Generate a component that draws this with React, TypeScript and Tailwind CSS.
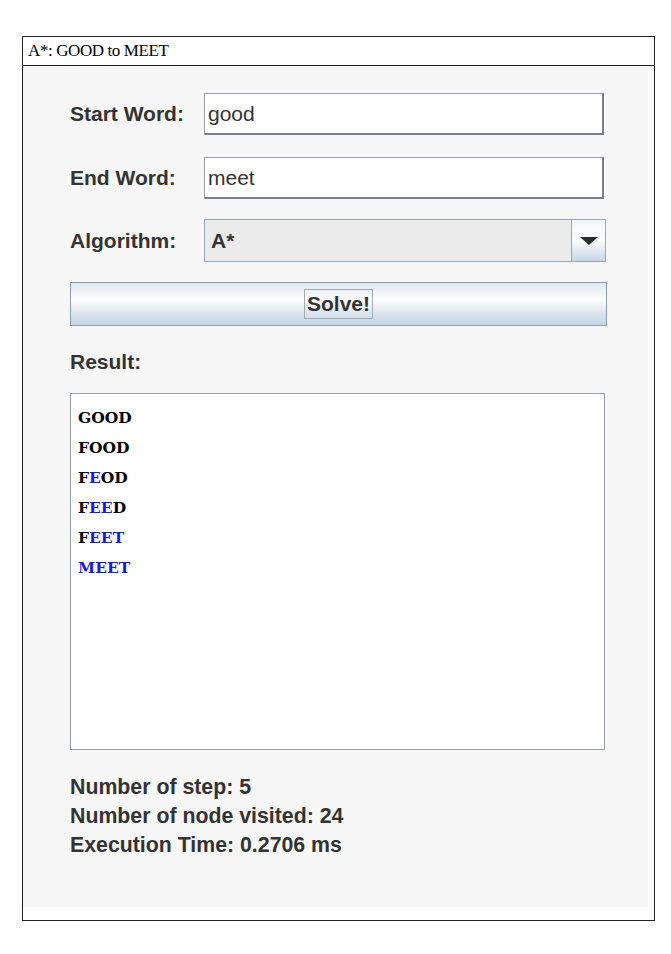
const steps: { text: string; blue: boolean[] }[] = [
  { text: "GOOD", blue: [false, false, false, false] },
  { text: "FOOD", blue: [false, false, false, false] },
  { text: "FEOD", blue: [false, true, false, false] },
  { text: "FEED", blue: [false, true, true, false] },
  { text: "FEET", blue: [false, true, true, true] },
  { text: "MEET", blue: [true, true, true, true] },
];

function Field({ label, value }: { label: string; value: string }) {
  return (
    <div className="flex items-center">
      <div className="w-[134px] text-[21px] font-bold text-[#333]">{label}</div>
      <div className="flex h-[42px] w-[400px] items-center border-t border-l border-r-2 border-b-2 border-t-[#9a9ea3] border-l-[#9a9ea3] border-r-[#7b7f84] border-b-[#7b7f84] bg-white pl-[3px] text-[21px] text-[#333]">
        {value}
      </div>
    </div>
  );
}

export default function App() {
  return (
    <div className="min-h-[954px] bg-white pt-[36px] pl-[22px] font-['Liberation_Sans',Arial,sans-serif]">
      <div className="w-[633px] border-[1.5px] border-[#222]">
        {/* Title */}
        <div className="flex h-[29px] items-center border-b-[1.5px] border-[#222] pl-[5px] font-['Liberation_Serif',serif] text-[17px] tracking-[-0.4px] text-black">
          A*: GOOD to MEET
        </div>

        <div className="h-[854px]">
          <div className="flex h-[841px] w-[625px] flex-col bg-[#f7f7f7] pt-[27px] pl-[47px]">
            <Field label="Start Word:" value="good" />
            <div className="mt-[22px]">
              <Field label="End Word:" value="meet" />
            </div>

            {/* Algorithm */}
            <div className="mt-[20px] flex items-center">
              <div className="w-[134px] text-[21px] font-bold text-[#333]">Algorithm:</div>
              <div className="flex h-[43px] w-[402px] border border-[#97a6b8] shadow-[inset_0_0_0_1px_#dde3ea]">
                <div className="flex flex-1 items-center bg-[#ebebeb] pl-[6px] text-[21px] font-bold text-[#333]">
                  A*
                </div>
                <div className="flex w-[34px] items-center justify-center border-l border-[#97a6b8] bg-gradient-to-b from-[#f4f7fa] via-[#fbfcfd] to-[#c9d6e4]">
                  <svg width="18" height="8" viewBox="0 0 18 8">
                    <path d="M0 0 H18 L9 8 Z" fill="#2b2b2b" />
                  </svg>
                </div>
              </div>
            </div>

            {/* Solve */}
            <div className="mt-[20px] flex h-[44px] w-[537px] items-center justify-center border border-[#8d9caf] bg-[linear-gradient(to_bottom,#e0e7ef_0%,#f6f8fa_30%,#ffffff_40%,#e2e9f1_65%,#c6d4e4_100%)]">
              <div className="flex h-[30px] items-center border border-[#a3a9b1] px-[2px] text-[21px] font-bold text-[#333]">
                Solve!
              </div>
            </div>

            <div className="mt-[24px] flex h-[24px] items-center text-[21px] font-bold text-[#333]">Result:</div>

            {/* Result box */}
            <div className="mt-[19px] h-[357px] w-[535px] border border-[#9a9ea3] bg-white pt-[9px] pl-[7px]">
              {steps.map((s) => (
                <div
                  key={s.text}
                  className="h-[30px] font-['DejaVu_Serif',serif] text-[15.5px] leading-[30px] font-bold"
                >
                  {s.text.split("").map((ch, i) => (
                    <span key={i} className={s.blue[i] ? "text-[#1a1ad6]" : "text-black"}>
                      {ch}
                    </span>
                  ))}
                </div>
              ))}
            </div>

            {/* Stats */}
            <div className="mt-[23px] text-[21.3px] leading-[29px] font-bold text-[#333]">
              <div>Number of step: 5</div>
              <div>Number of node visited: 24</div>
              <div>Execution Time: 0.2706 ms</div>
            </div>
          </div>
        </div>
      </div>
    </div>
  );
}
